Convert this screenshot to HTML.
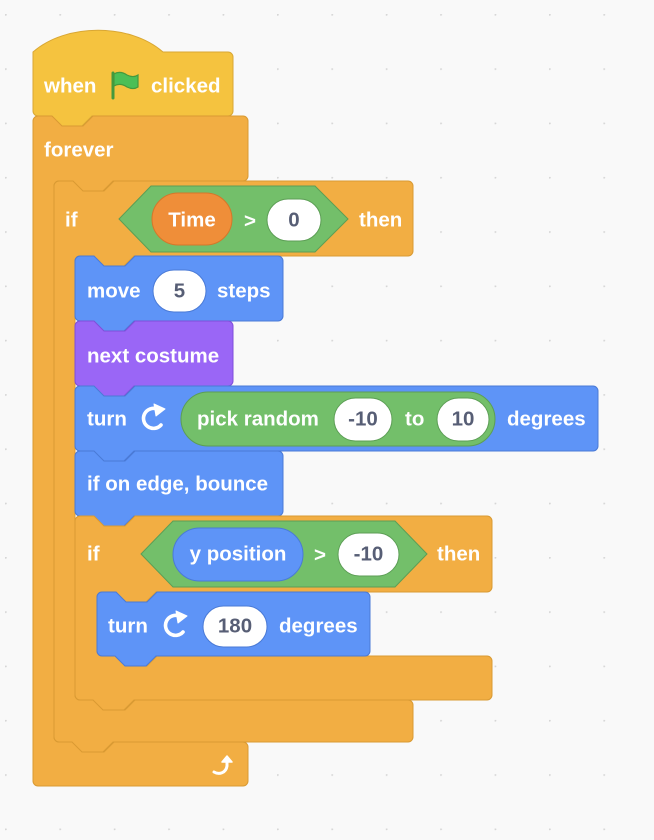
<!DOCTYPE html>
<html><head><meta charset="utf-8"><style>
html,body{margin:0;padding:0;background:#f9f9f9;}
svg{display:block;}
text{font-family:"Liberation Sans",sans-serif;font-weight:700;font-size:20.5px;fill:#fff;dominant-baseline:central;}
.n{fill:#575e75;text-anchor:middle;}
</style></head><body>
<svg width="654" height="840" viewBox="0 0 654 840" xmlns="http://www.w3.org/2000/svg">
<defs><pattern id="g" x="5" y="14" width="54.4" height="54.3" patternUnits="userSpaceOnUse"><circle cx="0.8" cy="0.8" r="1" fill="#d6d6d6"/></pattern></defs>
<rect width="654" height="840" fill="#f9f9f9"/>
<rect width="654" height="840" fill="url(#g)"/>

<path d="M33,52 c33,-29 97,-29 130,0 H228 a5,5 0 0 1 5,5 V111 a5,5 0 0 1 -5,5 H92 l-10,10 h-21 l-10,-10 H38 a5,5 0 0 1 -5,-5 Z" fill="#f5c33f" stroke="#d9a734" stroke-width="1"/>
<path d="M33,121 a5,5 0 0 1 5,-5 H52 l10,10 h21 l10,-10 H243 a5,5 0 0 1 5,5 V176 a5,5 0 0 1 -5,5 H113 l-10,10 h-21 l-10,-10 H59 a5,5 0 0 0 -5,5 V737 a5,5 0 0 0 5,5 H73 l10,10 h21 l10,-10 H243 a5,5 0 0 1 5,5 V781 a5,5 0 0 1 -5,5 H38 a5,5 0 0 1 -5,-5 Z" fill="#f2ae43" stroke="#d99a33" stroke-width="1"/>
<path d="M54,186 a5,5 0 0 1 5,-5 H73 l10,10 h21 l10,-10 H408 a5,5 0 0 1 5,5 V251 a5,5 0 0 1 -5,5 H134 l-10,10 h-21 l-10,-10 H80 a5,5 0 0 0 -5,5 V695 a5,5 0 0 0 5,5 H94 l10,10 h21 l10,-10 H408 a5,5 0 0 1 5,5 V737 a5,5 0 0 1 -5,5 H113 l-10,10 h-21 l-10,-10 H59 a5,5 0 0 1 -5,-5 Z" fill="#f2ae43" stroke="#d99a33" stroke-width="1"/>
<path d="M75,261 a5,5 0 0 1 5,-5 H94 l10,10 h21 l10,-10 H278 a5,5 0 0 1 5,5 V316 a5,5 0 0 1 -5,5 H134 l-10,10 h-21 l-10,-10 H80 a5,5 0 0 1 -5,-5 Z" fill="#5e94f7" stroke="#4a7ad6" stroke-width="1"/>
<path d="M75,326 a5,5 0 0 1 5,-5 H94 l10,10 h21 l10,-10 H228 a5,5 0 0 1 5,5 V381 a5,5 0 0 1 -5,5 H134 l-10,10 h-21 l-10,-10 H80 a5,5 0 0 1 -5,-5 Z" fill="#9a66f6" stroke="#7f4fd9" stroke-width="1"/>
<path d="M75,391 a5,5 0 0 1 5,-5 H94 l10,10 h21 l10,-10 H593 a5,5 0 0 1 5,5 V446 a5,5 0 0 1 -5,5 H134 l-10,10 h-21 l-10,-10 H80 a5,5 0 0 1 -5,-5 Z" fill="#5e94f7" stroke="#4a7ad6" stroke-width="1"/>
<path d="M75,456 a5,5 0 0 1 5,-5 H94 l10,10 h21 l10,-10 H278 a5,5 0 0 1 5,5 V511 a5,5 0 0 1 -5,5 H134 l-10,10 h-21 l-10,-10 H80 a5,5 0 0 1 -5,-5 Z" fill="#5e94f7" stroke="#4a7ad6" stroke-width="1"/>
<path d="M75,521 a5,5 0 0 1 5,-5 H94 l10,10 h21 l10,-10 H487 a5,5 0 0 1 5,5 V587 a5,5 0 0 1 -5,5 H156 l-10,10 h-21 l-10,-10 H102 a5,5 0 0 0 -5,5 V651 a5,5 0 0 0 5,5 H116 l10,10 h21 l10,-10 H487 a5,5 0 0 1 5,5 V695 a5,5 0 0 1 -5,5 H134 l-10,10 h-21 l-10,-10 H80 a5,5 0 0 1 -5,-5 Z" fill="#f2ae43" stroke="#d99a33" stroke-width="1"/>
<path d="M97,597 a5,5 0 0 1 5,-5 H116 l10,10 h21 l10,-10 H365 a5,5 0 0 1 5,5 V651 a5,5 0 0 1 -5,5 H156 l-10,10 h-21 l-10,-10 H102 a5,5 0 0 1 -5,-5 Z" fill="#5e94f7" stroke="#4a7ad6" stroke-width="1"/>

<text x="44" y="86">when</text>
<g transform="translate(111,72)">
<path d="M2,1 V26" stroke="#45993d" stroke-width="3" stroke-linecap="round"/>
<path d="M3,2 c5,-3 10,-1 13,1 c4,2 8,2 11,0 V15 c-3,2 -7,2 -11,0 c-3,-2 -8,-4 -13,-1 Z" fill="#4cbf56" stroke="#45993d" stroke-width="1.2"/>
</g>
<text x="151" y="86">clicked</text>

<text x="44" y="150">forever</text>

<text x="65" y="220">if</text>
<path d="M119,219 L151,186 H315 L348,219 L315,252 H151 Z" fill="#73bf6a" stroke="#5c9e55"/>
<rect x="152" y="193" width="80" height="52" rx="26" fill="#ef8e39" stroke="#d4772a"/>
<text x="192" y="220" style="text-anchor:middle">Time</text>
<text x="250" y="221" style="text-anchor:middle">&gt;</text>
<rect x="267" y="199" width="54" height="42" rx="21" fill="#fff" stroke="#5c9e55"/>
<text x="294" y="220" class="n">0</text>
<text x="359" y="220">then</text>

<text x="87" y="291">move</text>
<rect x="153" y="270" width="53" height="42" rx="21" fill="#fff" stroke="#4a7ad6"/>
<text x="179.5" y="291" class="n">5</text>
<text x="217" y="291">steps</text>

<text x="87" y="356">next costume</text>

<text x="87" y="419">turn</text>
<g transform="translate(140,404)" fill="none" stroke="#fff" stroke-width="3.6" stroke-linecap="round">
<path d="M21,21 A10,10 0 1 1 17,5"/>
<path d="M14,0 L25,5 L16,12 Z" fill="#fff" stroke-width="1" stroke-linejoin="round"/>
</g>
<rect x="181" y="392" width="314" height="54" rx="27" fill="#73bf6a" stroke="#5c9e55"/>
<text x="197" y="419">pick random</text>
<rect x="334" y="398" width="58" height="43" rx="21.5" fill="#fff" stroke="#5c9e55"/>
<text x="363" y="419" class="n">-10</text>
<text x="405" y="419">to</text>
<rect x="437" y="398" width="52" height="43" rx="21.5" fill="#fff" stroke="#5c9e55"/>
<text x="463" y="419" class="n">10</text>
<text x="507" y="419">degrees</text>

<text x="87" y="484">if on edge, bounce</text>

<text x="87" y="554">if</text>
<path d="M141,554 L173,521 H395 L427,554 L395,587 H173 Z" fill="#73bf6a" stroke="#5c9e55"/>
<rect x="173" y="528" width="130" height="53" rx="26.5" fill="#5e94f7" stroke="#4a7ad6"/>
<text x="238" y="554" style="text-anchor:middle">y position</text>
<text x="320" y="555" style="text-anchor:middle">&gt;</text>
<rect x="338" y="533" width="61" height="43" rx="21.5" fill="#fff" stroke="#5c9e55"/>
<text x="368.5" y="554" class="n">-10</text>
<text x="437" y="554">then</text>

<text x="108" y="626">turn</text>
<g transform="translate(162,611)" fill="none" stroke="#fff" stroke-width="3.6" stroke-linecap="round">
<path d="M21,21 A10,10 0 1 1 17,5"/>
<path d="M14,0 L25,5 L16,12 Z" fill="#fff" stroke-width="1" stroke-linejoin="round"/>
</g>
<rect x="203" y="606" width="64" height="41" rx="20.5" fill="#fff" stroke="#4a7ad6"/>
<text x="235" y="626" class="n">180</text>
<text x="279" y="626">degrees</text>

<g transform="translate(212,754)" fill="none" stroke="#fff" stroke-width="3" stroke-linecap="round" stroke-linejoin="round">
<path d="M2,18 c5,3 12,1 13,-6 V5"/>
<path d="M10,8 L15,2 L20,8 Z" fill="#fff" stroke-width="1.5"/>
</g>
</svg>
</body></html>
